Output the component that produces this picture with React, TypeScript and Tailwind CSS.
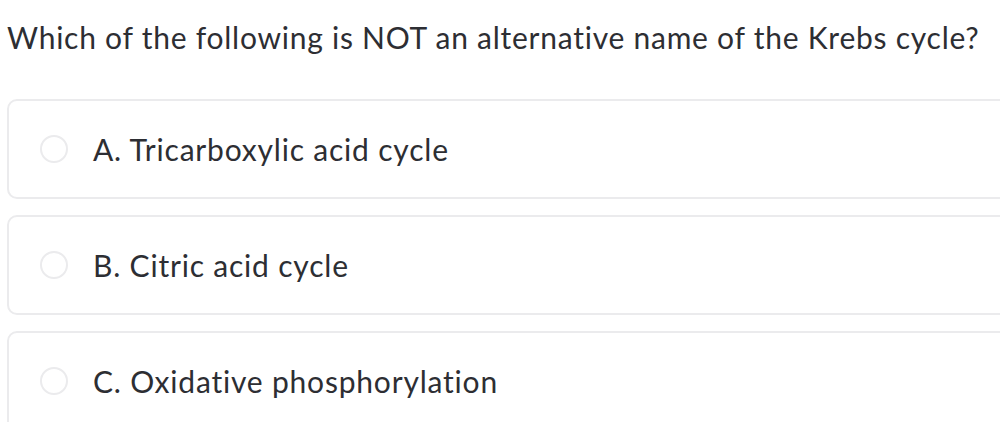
const options = [
  'A. Tricarboxylic acid cycle',
  'B. Citric acid cycle',
  'C. Oxidative phosphorylation',
];

export default function App() {
  return (
    <div className="h-[422px] w-[1000px] overflow-hidden bg-white font-['Lato',sans-serif] text-[#2d2e33]">
      <h1 className="pl-[7px] pt-[18px] text-[30px] leading-[38px] font-normal tracking-[0.75px]">
        Which of the following is NOT an alternative name of the Krebs cycle?
      </h1>
      <div className="ml-[7px] mt-[43px] flex w-[1010px] flex-col gap-[16px]">
        {options.map((o) => (
          <div
            key={o}
            className="flex h-[100px] items-center rounded-[10px] border-2 border-[#ebebed] pl-[31px]"
          >
            <span className="h-[28px] w-[28px] shrink-0 rounded-full border-2 border-[#ebebed]" />
            <span className="ml-[25px] text-[30px] tracking-[0.8px]">{o}</span>
          </div>
        ))}
      </div>
    </div>
  );
}
